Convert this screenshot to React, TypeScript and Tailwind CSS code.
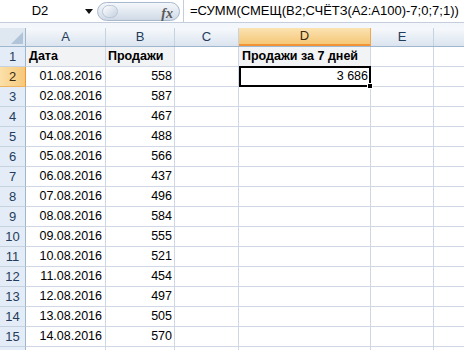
import React from 'react'

const rows: [string, string, string][] = [
  ['01.08.2016', '558', '3 686'],
  ['02.08.2016', '587', ''],
  ['03.08.2016', '467', ''],
  ['04.08.2016', '488', ''],
  ['05.08.2016', '566', ''],
  ['06.08.2016', '437', ''],
  ['07.08.2016', '496', ''],
  ['08.08.2016', '584', ''],
  ['09.08.2016', '555', ''],
  ['10.08.2016', '521', ''],
  ['11.08.2016', '454', ''],
  ['12.08.2016', '497', ''],
  ['13.08.2016', '505', ''],
  ['14.08.2016', '570', ''],
]

const font = { fontFamily: '"Liberation Sans", Arial, sans-serif' }

function ColHead({ label, w, active }: { label: string; w: string; active?: boolean }) {
  return (
    <div
      className={`${w} h-full flex items-center justify-center border-r text-[13px] ${
        active
          ? 'bg-gradient-to-b from-[#fbe3b1] to-[#f6c777] border-r-[#f0a94a] border-b-2 border-b-[#f29436] text-[#3a2a10]'
          : 'bg-gradient-to-b from-[#f6f9fc] to-[#dbe4ef] border-r-[#c5d2e0] text-[#243c5c]'
      }`}
    >
      {label}
    </div>
  )
}

function RowHead({ n, active }: { n?: number; active?: boolean }) {
  return (
    <div
      className={`w-[26px] h-full flex items-center justify-center border-r border-b text-[13px] ${
        active
          ? 'bg-gradient-to-r from-[#fbe0a8] to-[#f6c97c] border-r-[#f29436] border-b-[#f0b25e] text-[#3a2a10]'
          : 'bg-[#e4ecf7] border-r-[#9eb6ce] border-b-[#c5d2e0] text-[#243c5c]'
      }`}
    >
      {n}
    </div>
  )
}

export default function App() {
  return (
    <div className="w-[464px] h-[350px] overflow-hidden bg-white" style={font}>
      {/* formula bar */}
      <div className="h-[23px] flex items-center border-b border-[#c3cddb] bg-white">
        <div className="w-[80px] text-center text-[13px] text-black">D2</div>
        <div className="w-[17px] flex justify-center">
          <svg width="8" height="5" viewBox="0 0 8 5">
            <path d="M0 0h8L4 5z" fill="#111" />
          </svg>
        </div>
        <div className="relative w-[83px] h-[19px] rounded-full border border-[#a9b9cd] bg-gradient-to-b from-[#f4f7fb] via-[#e3e9f1] to-[#cfd9e6]">
          <div className="absolute left-[4px] top-[2px] w-[16px] h-[13px] rounded-full bg-gradient-to-br from-white to-[#c4d0df] border border-[#b9c6d6]" />
          <span
            className="absolute right-[6px] top-[0px] text-[14px] italic font-bold text-[#5a5a5a]"
            style={{ fontFamily: '"Liberation Serif", serif' }}
          >
            fx
          </span>
        </div>
        <div className="ml-[3px] h-full flex-1 border-l border-[#c3cddb] pl-[6px] flex items-center text-[13px] text-black whitespace-nowrap">
          =СУММ(СМЕЩ(B2;СЧЁТЗ(A2:A100)-7;0;7;1))
        </div>
      </div>
      <div className="h-[5px] bg-[#f3f6fa]" />

      {/* column headers */}
      <div className="h-[19px] flex border-b border-[#9eb6ce]">
        <div className="relative w-[26px] h-full bg-[#dfe7f1] border-r border-[#9eb6ce]">
          <svg className="absolute right-[2px] bottom-[2px]" width="12" height="12" viewBox="0 0 12 12">
            <path d="M12 0V12H0z" fill="#b2c4d9" />
          </svg>
        </div>
        <ColHead label="A" w="w-[80px]" />
        <ColHead label="B" w="w-[69px]" />
        <ColHead label="C" w="w-[64px]" />
        <ColHead label="D" w="w-[132px]" active />
        <ColHead label="E" w="w-[63px]" />
        <div className="flex-1 h-full bg-gradient-to-b from-[#f6f9fc] to-[#dbe4ef]" />
      </div>

      {/* row 1 */}
      <div className="h-[20px] flex text-[12.5px] text-black">
        <RowHead n={1} />
        <div className="w-[80px] border-r border-b border-[#d0d7e5] bg-[#f2f3f5] pl-[3px] flex items-center font-bold">Дата</div>
        <div className="w-[69px] border-r border-b border-[#d0d7e5] bg-[#f2f3f5] pl-[2px] flex items-center font-bold">Продажи</div>
        <div className="w-[64px] border-r border-b border-[#d0d7e5]" />
        <div className="w-[132px] border-r border-b border-[#d0d7e5] bg-[#f2f3f5] pl-[3px] flex items-center font-bold whitespace-nowrap">
          Продажи за 7 дней
        </div>
        <div className="w-[63px] border-r border-b border-[#d0d7e5]" />
        <div className="flex-1 border-b border-[#d0d7e5]" />
      </div>

      {rows.map((r, i) => (
        <div key={i} className="h-[20px] flex text-[12.5px] text-black">
          <RowHead n={i + 2} active={i === 0} />
          <div className="w-[80px] border-r border-b border-[#d0d7e5] pr-[3px] flex items-center justify-end">{r[0]}</div>
          <div className="w-[69px] border-r border-b border-[#d0d7e5] pr-[2px] flex items-center justify-end">{r[1]}</div>
          <div className="w-[64px] border-r border-b border-[#d0d7e5]" />
          {i === 0 ? (
            <div className="relative w-[132px] -mt-px h-[21px] border-2 border-black pr-[1px] flex items-center justify-end">
              {r[2]}
              <div className="absolute -right-[4px] -bottom-[4px] w-[6px] h-[6px] bg-black border border-white" />
            </div>
          ) : (
            <div className="w-[132px] border-r border-b border-[#d0d7e5]" />
          )}
          <div className="w-[63px] border-r border-b border-[#d0d7e5]" />
          <div className="flex-1 border-b border-[#d0d7e5]" />
        </div>
      ))}

      {/* partial row 16 */}
      <div className="h-[20px] flex">
        <RowHead />
        <div className="w-[80px] border-r border-[#d0d7e5]" />
        <div className="w-[69px] border-r border-[#d0d7e5]" />
        <div className="w-[64px] border-r border-[#d0d7e5]" />
        <div className="w-[132px] border-r border-[#d0d7e5]" />
        <div className="w-[63px] border-r border-[#d0d7e5]" />
      </div>
    </div>
  )
}
